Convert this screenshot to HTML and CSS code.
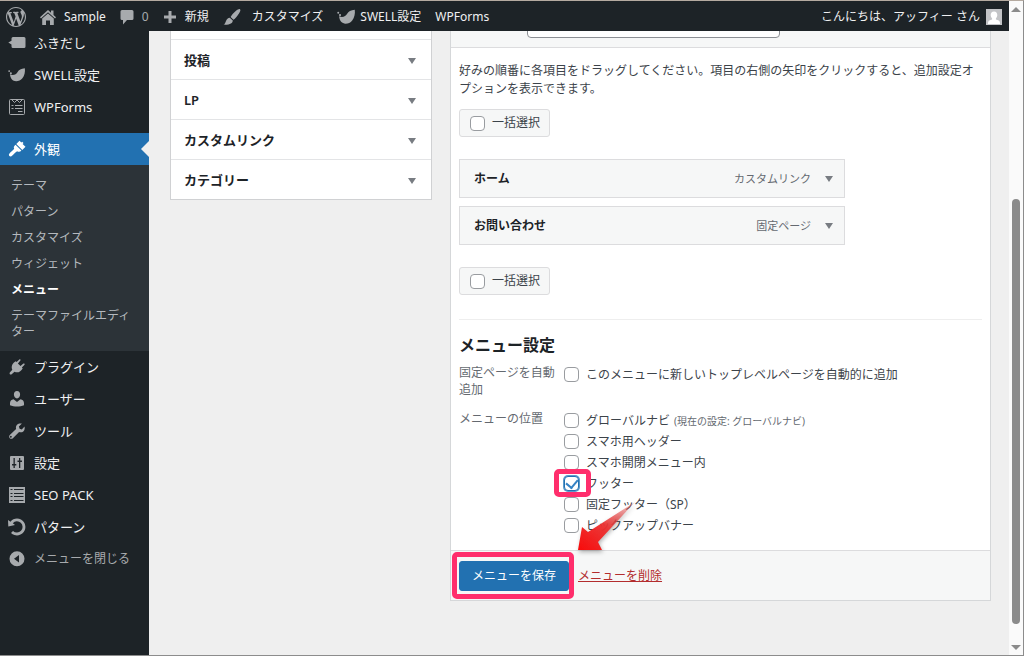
FILE: index.html
```html
<!DOCTYPE html>
<html lang="ja">
<head>
<meta charset="utf-8">
<title>メニュー ‹ Sample — WordPress</title>
<link rel="stylesheet" href="styles.css">
</head>
<body>
<svg class="defs" aria-hidden="true">
  <symbol id="swell" viewBox="0 0 20 16"><path d="M2.200 7.300c3.600 1.600 7 .2 8.500-2.600C12 2.200 14.500.8 18.700.4c.6 4.300-.4 8.300-2.700 11.200-1.800 2.300-4.200 3.400-7 3.400-3.700 0-6.300-2.500-6.800-7.700z"/><circle cx="1.300" cy="3.600" r="1"/><circle cx="3.200" cy="6" r="1.100"/></symbol>
</svg>
<div class="window">
  <div class="screen">
    <header class="adminbar">
      <a class="bar-item wp" href="#" aria-label="WordPress"><svg viewBox="0 0 20 20" width="20" height="20"><path d="M20 10c0-5.510-4.490-10-10-10C4.480 0 0 4.490 0 10c0 5.520 4.480 10 10 10 5.510 0 10-4.480 10-10zM7.780 15.370L4.370 6.220c.55-.02 1.170-.08 1.170-.08.5-.06.44-1.130-.06-1.110 0 0-1.450.11-2.370.11-.18 0-.37 0-.58-.01C4.120 2.690 6.870 1.110 10 1.110c2.330 0 4.450.87 6.050 2.340-.68-.11-1.650.39-1.650 1.580 0 .74.45 1.360.9 2.100.35.61.55 1.360.55 2.460 0 1.490-1.400 5-1.400 5l-3.030-8.370c.54-.02.82-.17.82-.17.5-.05.44-1.250-.06-1.220 0 0-1.440.12-2.380.12-.87 0-2.330-.12-2.330-.12-.5-.03-.56 1.200-.06 1.220l.92.08 1.260 3.410zM17.410 10c.24-.64.74-1.870.43-4.250.7 1.290 1.050 2.710 1.050 4.250 0 3.290-1.730 6.240-4.400 7.780.97-2.590 1.940-5.200 2.920-7.780zM6.100 18.090C3.120 16.650 1.110 13.530 1.110 10c0-1.300.23-2.480.72-3.590C3.250 10.300 4.670 14.200 6.100 18.090zm4.030-6.630l2.580 6.980c-.86.29-1.760.45-2.710.45-.79 0-1.570-.11-2.290-.33.81-2.380 1.620-4.740 2.420-7.100z"/></svg></a>
      <a class="bar-item" href="#"><svg viewBox="0 0 16 16" width="16" height="16"><path d="M8 1l3 2.700V1.500h2.500V6L16 8.300l-1 1.100-7-6.200-7 6.200-1-1.100zM8 4.400l5.800 5.200V16H10v-4.500H6V16H2.200V9.600z"/></svg>Sample</a>
      <a class="bar-item muted" href="#"><svg viewBox="0 0 14 16" width="14" height="16"><path d="M2 1h10q1.500 0 1.500 1.500v7Q13.500 11 12 11H7l-4 4.500V11H2Q.5 11 .5 9.500v-7Q.5 1 2 1z"/></svg>0</a>
      <a class="bar-item" href="#"><svg viewBox="0 0 14 14" width="14" height="14"><path d="M5.500 1h3v4.500H13v3H8.500V13h-3V8.500H1v-3h4.500z"/></svg>新規</a>
      <a class="bar-item" href="#"><svg class="brush" viewBox="0 0 18 16" width="18" height="16"><path d="M17 .3c.9.800 0 2.600-1.200 4.400-1.500 2.300-3.600 4.900-5.300 6L7.600 8c1-2 3.300-4.500 5.400-6.200C14.800.5 16.300-.3 17 .3zM6.800 8.700l3 2.700c0 2.600-3 4.600-9.300 4.200 1.700-.9 1.900-2 2.500-3.600.7-1.900 2-3.200 3.800-3.300z"/></svg>カスタマイズ</a>
      <a class="bar-item tight" href="#"><svg width="19" height="16"><use href="#swell"/></svg>SWELL設定</a>
      <a class="bar-item" href="#">WPForms</a>
      <a class="bar-item account" href="#">こんにちは、アッフィー さん<svg viewBox="0 0 16 16" width="16" height="16"><path class="av-bg" d="M0 0h16v16H0z"/><path class="av-fg" d="M8 2.500c2.200 0 3.300 1.500 3.300 3.600 0 1.500-.7 2.800-1.400 3.400v1c2 .5 4.100 1.300 4.100 3.500v1H2v-1c0-2.200 2.100-3 4.100-3.500v-1c-.7-.6-1.400-1.900-1.400-3.400C4.700 4 5.800 2.500 8 2.500z"/></svg></a>
    </header>
    <div class="columns">
      <nav class="sidebar">
        <a class="side-item" href="#"><svg viewBox="0 0 18 18"><path d="M5 3h11q1.500 0 1.500 1.500v8q0 1.500-1.500 1.500H5q-1.500 0-1.500-1.500v-2L.3 8.500 3.500 6.700V4.500Q3.500 3 5 3z"/></svg>ふきだし</a>
        <a class="side-item" href="#"><svg><use href="#swell"/></svg>SWELL設定</a>
        <a class="side-item" href="#"><svg class="line" viewBox="0 0 18 18"><rect x="1.500" y="1.500" width="15" height="15" rx="1"/><path d="M4 2l2.500 2.500L9 2l2.500 2.500L14 2M3.500 7.500h2M7 7.500h7.500M3.500 10.500h2M7 10.500h7.500M10 13.500h4.500"/></svg>WPForms</a>
        <a class="side-item current" href="#"><svg viewBox="0 0 18 18"><path d="M11.500 .8l1.800 1.700.9-.8 1.300 1.300-.9.900 2.900 2.800-3.200 3.200L8.300 4zM7.500 4.800l5.900 5.700c-1.200 1.400-2.600 1.700-4.300.7-1.800 1-3.600 3.400-5.700 5-1.300.9-3.200-.8-2.300-2.200 1.400-2 3.900-3.500 5.100-5.200C5.300 7.300 6 6 7.500 4.800z"/></svg>外観</a>
        <div class="submenu">
          <a href="#">テーマ</a>
          <a href="#">パターン</a>
          <a href="#">カスタマイズ</a>
          <a href="#">ウィジェット</a>
          <a class="active" href="#">メニュー</a>
          <a href="#">テーマファイルエディター</a>
        </div>
        <a class="side-item" href="#"><svg viewBox="0 0 18 18"><path d="M11.300 1.500c.7-.6 1.700.3 1.100 1.100L9.900 5.500l2.600 2.600 2.900-2.500c.8-.6 1.700.4 1.100 1.100l-2.600 2.900.8.800c-1.800 3-4.700 4.900-8.200 3.400L3.700 16.300c-1.300.9-2.700-.4-1.900-1.800l2.500-2.800C2.700 8.300 4.700 4.900 7.700 3.200l.9.900z"/></svg>プラグイン</a>
        <a class="side-item" href="#"><svg viewBox="0 0 18 18"><path d="M9 1c2 0 3.200 1.600 3.100 3.600C12 6.700 10.800 8.500 9 8.500S6 6.700 5.900 4.600C5.800 2.600 7 1 9 1zM5.500 9.200L9 12l3.500-2.800c2.200.4 3.500 1.800 3.500 4v2c-4 1.700-10 1.700-14 0v-2c0-2.200 1.300-3.600 3.500-4z"/></svg>ユーザー</a>
        <a class="side-item" href="#"><svg viewBox="0 0 18 18"><path d="M16.500 4.500c.5 2.100.1 3.800-1.200 4.900-1.200 1-2.700 1.200-4.200.7l-6.200 6.100c-1 .9-2.300.8-3.100 0-.8-.8-.9-2.100 0-3.100l6.300-6.200c-.4-1.500-.2-2.900.9-4.100 1.300-1.300 3-1.700 4.900-1.200l-3 2.900.7 2.200 2.200.7zM3.300 14a.9.900 0 1 0 .1 1.500A.9.900 0 0 0 3.300 14z"/></svg>ツール</a>
        <a class="side-item" href="#"><svg viewBox="0 0 18 18"><path fill-rule="evenodd" d="M3 2h12q1 0 1 1v12q0 1-1 1H3q-1 0-1-1V3q0-1 1-1zM5.500 4v6H4v1.500h1.500V14h1.300v-2.500h1.500V10H6.800V4zM11 4v2.500H9.500V8H11v6h1.300V8H14V6.500h-1.700V4z"/></svg>設定</a>
        <a class="side-item" href="#"><svg viewBox="0 0 18 18"><path d="M1 1h16v16H1z"/><path class="slot" d="M2.500 3.500h2M6 3.500h9.500M2.500 7.500h2M6 7.500h9.500M2.500 10.500h2M6 10.500h9.500M2.500 14.500h2M6 14.500h9.500"/></svg>SEO PACK</a>
        <a class="side-item" href="#"><svg viewBox="0 0 18 18"><path d="M0 2l2.500 1.700C4 1.800 6.500.6 9 .6a8.400 8.400 0 1 1-6 14.300l2-2a5.600 5.600 0 1 0-.2-7.700L7 7 .3 8.500z"/></svg>パターン</a>
        <a class="side-item collapse" href="#"><svg viewBox="0 0 18 18"><path fill-rule="evenodd" d="M9 1.200a7.500 7.500 0 1 1 0 15 7.500 7.500 0 0 1 0-15zM11 5L6 8.700l5 3.700z"/></svg>メニューを閉じる</a>
      </nav>
      <main class="content">
        <section class="accordion">
          <div class="stub"></div>
          <button class="acc-row" type="button">投稿<span class="caret"></span></button>
          <button class="acc-row" type="button">LP<span class="caret"></span></button>
          <button class="acc-row" type="button">カスタムリンク<span class="caret"></span></button>
          <button class="acc-row" type="button">カテゴリー<span class="caret"></span></button>
        </section>
        <form class="editor">
          <div class="editor-head"><input class="name" type="text" aria-label="メニュー名"></div>
          <div class="editor-body">
            <p class="help">好みの順番に各項目をドラッグしてください。項目の右側の矢印をクリックすると、追加設定オプションを表示できます。</p>
            <label class="bulk"><input type="checkbox">一括選択</label>
            <ul class="items">
              <li><strong>ホーム</strong><span>カスタムリンク</span><button class="toggle" type="button" aria-label="ホームを編集"><span class="caret"></span></button></li>
              <li><strong>お問い合わせ</strong><span>固定ページ</span><button class="toggle" type="button" aria-label="お問い合わせを編集"><span class="caret"></span></button></li>
            </ul>
            <label class="bulk"><input type="checkbox">一括選択</label>
            <div class="settings">
              <h3>メニュー設定</h3>
              <div class="group">
                <div class="legend">固定ページを自動追加</div>
                <div class="options"><label><input type="checkbox">このメニューに新しいトップレベルページを自動的に追加</label></div>
              </div>
              <div class="group">
                <div class="legend">メニューの位置</div>
                <div class="options">
                  <label><input type="checkbox">グローバルナビ <small>(現在の設定: グローバルナビ)</small></label>
                  <label><input type="checkbox">スマホ用ヘッダー</label>
                  <label><input type="checkbox">スマホ開閉メニュー内</label>
                  <label class="marked"><input type="checkbox" checked>フッター<span class="mark"></span></label>
                  <label><input type="checkbox">固定フッター（SP）</label>
                  <label><input type="checkbox">ピックアップバナー</label>
                </div>
              </div>
            </div>
          </div>
          <div class="editor-foot">
            <div class="marked"><button class="save" type="button">メニューを保存</button><span class="mark"></span></div>
            <a class="delete" href="#">メニューを削除</a>
            <svg class="arrow" viewBox="0 0 64 54" width="64" height="54" aria-hidden="true">
              <defs><linearGradient id="fade" x1="0" y1="1" x2="1" y2="0"><stop offset="0" stop-color="#f80a0a"/><stop offset=".5" stop-color="#ec3232" stop-opacity=".95"/><stop offset="1" stop-color="#e06060" stop-opacity=".3"/></linearGradient></defs>
              <path fill="url(#fade)" d="M2 50L6 27l6 5L59 2 22 42l4 8z"/>
            </svg>
          </div>
        </form>
      </main>
    </div>
  </div>
  <div class="scrollbar" aria-hidden="true"><i class="up"></i><i class="thumb"></i><i class="down"></i></div>
</div>
</body>
</html>
```
FILE: styles.css
```css
* { box-sizing: border-box; }
body {
  margin: 0;
  height: 100vh;
  overflow: hidden;
  background: #efefef;
  color: #3c434a;
  font: 12px/18px "Noto Sans", "Noto Sans CJK JP", sans-serif;
}
a { color: inherit; text-decoration: none; }
button, input { font: inherit; color: inherit; }
svg { flex: none; fill: currentColor; }
.defs { position: absolute; width: 0; height: 0; }

.window {
  display: flex;
  height: 100vh;
  border: solid #8c8c8c;
  border-width: 1px 1px 1px 0;
  border-top-color: #b5aaa0;
}
.screen { flex: 1; min-width: 0; display: flex; flex-direction: column; }

/* Toolbar */
.adminbar {
  display: flex;
  align-items: center;
  gap: 14px;
  height: 30px;
  flex: none;
  padding: 1px 7px 0 6px;
  background: #1d2327;
  color: #f0f0f1;
  white-space: nowrap;
}
.bar-item { display: flex; align-items: center; gap: 8px; }
.bar-item svg { color: #a7aaad; }
.bar-item.tight { gap: 4px; }
.bar-item.muted { color: #a7aaad; }
.bar-item .brush { margin-right: 3px; }
.account { margin-left: auto; gap: 6px; }
.av-bg { fill: #c3c4c7; }
.av-fg { fill: #fff; }

.columns { flex: 1; min-height: 0; display: flex; overflow: hidden; }

/* Side menu */
.sidebar {
  width: 149px;
  flex: none;
  background: #1d2327;
  color: #f0f0f1;
}
.side-item {
  display: flex;
  align-items: center;
  gap: 8px;
  height: 32px;
  padding-left: 8px;
  font-size: 13px;
}
.side-item:first-child { margin-top: -4px; }
.side-item svg { width: 18px; height: 18px; color: #a7aaad; }
.line { fill: none; stroke: currentColor; }
.slot { stroke: #1d2327; }
.side-item.current { position: relative; margin-top: 10px; background: #2271b1; color: #fff; }
.side-item.current svg { color: #fff; }
.side-item.current::after {
  content: "";
  position: absolute;
  right: 0;
  top: 8px;
  border: solid transparent;
  border-width: 8px 8px 8px 0;
  border-right-color: #efefef;
}
.side-item.collapse { color: #a7aaad; font-size: 12px; }
.submenu { padding: 8px 0 6px; background: #2c3338; color: #b4b9be; }
.submenu a { display: block; padding: 5px 11px; line-height: 16px; }
.submenu .active { color: #fff; font-weight: 700; }

/* Content */
.content {
  flex: 1;
  min-width: 0;
  display: flex;
  align-items: flex-start;
  gap: 18px;
  padding: 0 18px 0 21px;
}
.accordion {
  width: 262px;
  flex: none;
  background: #fff;
  border: 1px solid #d0d1d3;
  border-top: 0;
}
.stub { height: 8px; }
.acc-row {
  display: flex;
  align-items: center;
  justify-content: space-between;
  width: 100%;
  height: 40px;
  padding: 0 15px 0 13px;
  border: 0;
  border-top: 1px solid #e3e4e6;
  background: #fff;
  color: #1d2327;
  font-size: 13px;
  font-weight: 600;
}
.acc-row .caret { margin-top: 2px; }
.caret {
  border: solid transparent;
  border-width: 6px 4px 0;
  border-top-color: #787c82;
}

.editor {
  flex: 1;
  min-width: 0;
  background: #fff;
  border: 1px solid #d5d7d9;
  border-top: 0;
}
.editor-head {
  display: flex;
  align-items: flex-end;
  height: 17px;
  padding: 0 0 9px 76px;
  background: #f6f7f7;
  border-bottom: 1px solid #dcdcde;
}
.name {
  width: 253px;
  height: 28px;
  border: 1px solid #8c8f94;
  border-radius: 4px;
  background: #fff;
}
.editor-body { padding: 14px 8px 14px; }
.help { margin: 0 0 11px; }
.bulk {
  display: flex;
  align-items: center;
  gap: 7px;
  width: max-content;
  height: 28px;
  padding: 0 9px 0 10px;
  border: 1px solid #dcdcde;
  border-radius: 3px;
  background: #f6f7f7;
}
input[type="checkbox"] {
  appearance: none;
  flex: none;
  display: grid;
  place-items: center;
  width: 15px;
  height: 15px;
  margin: 0;
  border: 1px solid #999ca0;
  border-radius: 4px;
  background: #fff;
}
input[type="checkbox"]:checked { border-color: #2271b1; box-shadow: 0 0 0 1px #5b9acb; }
input[type="checkbox"]:checked::before {
  content: "";
  width: 6px;
  height: 9px;
  margin-bottom: 3px;
  border: solid #3582c4;
  border-width: 0 2px 2px 0;
  transform: rotate(40deg);
}
.items {
  display: grid;
  gap: 8px;
  max-width: 386px;
  margin: 22px 0;
  padding: 0;
  list-style: none;
}
.items li {
  display: flex;
  align-items: center;
  height: 39px;
  padding: 0 11px 0 14px;
  border: 1px solid #dcdcde;
  background: #f6f7f7;
}
.items strong { flex: 1; color: #1d2327; font-weight: 600; }
.items li > span { color: #646970; font-size: 11px; }
.toggle { display: flex; margin-left: 14px; padding: 0; border: 0; background: none; }

.settings { margin-top: 24px; padding-top: 14px; border-top: 1px solid #eee; }
h3 { margin: 0 0 8px; color: #1d2327; font-size: 16px; line-height: 22px; font-weight: 600; }
.group { display: flex; gap: 5px; margin-bottom: 12px; }
.group:last-child { margin-bottom: 0; }
.legend { width: 100px; flex: none; color: #646970; line-height: 17px; }
.options { display: grid; flex: 1; }
.options label { display: flex; align-items: center; height: 21px; width: max-content; }
.options input { margin-right: 7px; }
.options small { margin-left: 4px; color: #646970; font-size: 10px; }

.editor-foot {
  position: relative;
  display: flex;
  align-items: center;
  gap: 9px;
  height: 50px;
  padding: 0 8px;
  border-top: 1px solid #dcdcde;
  background: #f6f7f7;
}
.save {
  display: block;
  height: 30px;
  padding: 0 12px;
  border: 1px solid #2271b1;
  border-radius: 3px;
  background: #2271b1;
  color: #fff;
}
.delete { color: #b32d2e; text-decoration: underline; }

/* Highlights over the controls */
.marked { position: relative; }
.mark {
  position: absolute;
  border: 5px solid #ff2e6c;
  border-radius: 5px;
  pointer-events: none;
}
.options .mark { left: -10px; top: -4px; width: 37px; height: 28px; }
.editor-foot .mark { inset: -9px -5px -8px -7px; }
.arrow { position: absolute; left: 125px; top: -51px; filter: drop-shadow(1px 2px 2px rgba(0, 0, 0, .3)); }

/* Scroll bar */
.scrollbar {
  width: 14px;
  flex: none;
  display: flex;
  flex-direction: column;
  align-items: center;
  padding: 6px 0 5px;
  background: #fafafa;
}
.up, .down { border: solid transparent; }
.up { border-width: 0 5px 5px; border-bottom-color: #8b8b8b; }
.down { border-width: 5px 5px 0; border-top-color: #8b8b8b; margin-top: 21px; }
.thumb { flex: 1; width: 8px; margin-top: 187px; border-radius: 4px; background: #8b8b8b; }
```
